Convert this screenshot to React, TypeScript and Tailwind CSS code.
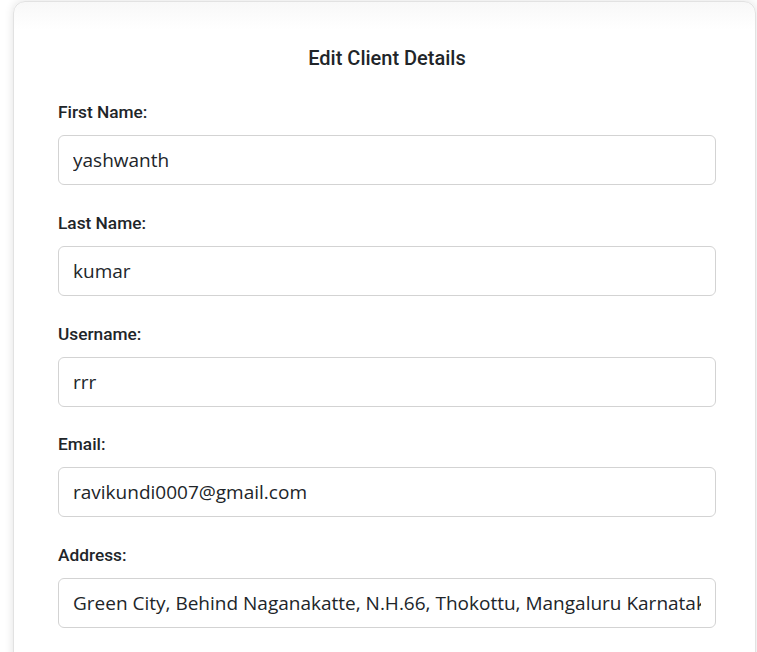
import React from "react";

const fields = [
  { label: "First Name:", value: "yashwanth" },
  { label: "Last Name:", value: "kumar" },
  { label: "Username:", value: "rrr" },
  { label: "Email:", value: "ravikundi0007@gmail.com" },
  { label: "Address:", value: "Green City, Behind Naganakatte, N.H.66, Thokottu, Mangaluru Karnataka 575017" },
];

export default function App() {
  return (
    <div className="w-[757px] h-[652px] overflow-hidden bg-white pl-[13px] pt-[1px]">
      <div className="flex flex-col w-[743px] h-[700px] rounded-[12px] border border-[#e2e2e2] bg-[linear-gradient(to_bottom,#f8f8f8_0px,#ffffff_28px)] shadow-[0_0_10px_rgba(0,0,0,0.12)] pl-[44px] pr-[39px]">
        <h2 className="text-center text-[20px] font-medium leading-[24px] text-[#212529] pt-[44px] pb-[30px] font-[Roboto,'Liberation_Sans',sans-serif]">
          Edit Client Details
        </h2>
        {fields.map((f) => (
          <div key={f.label} className="flex flex-col gap-[11px] mb-[25.75px]">
            <label className="block text-[17.3px] font-medium leading-[24px] text-[#212529] font-[Roboto,'Liberation_Sans',sans-serif]">
              {f.label}
            </label>
            <input
              readOnly
              value={f.value}
              className="block w-[658px] h-[50px] rounded-[6px] border border-[#d3d3d3] bg-white px-[14px] text-[19px] text-[#212529] outline-none font-['Open_Sans','Noto_Sans',sans-serif]"
            />
          </div>
        ))}
      </div>
    </div>
  );
}
